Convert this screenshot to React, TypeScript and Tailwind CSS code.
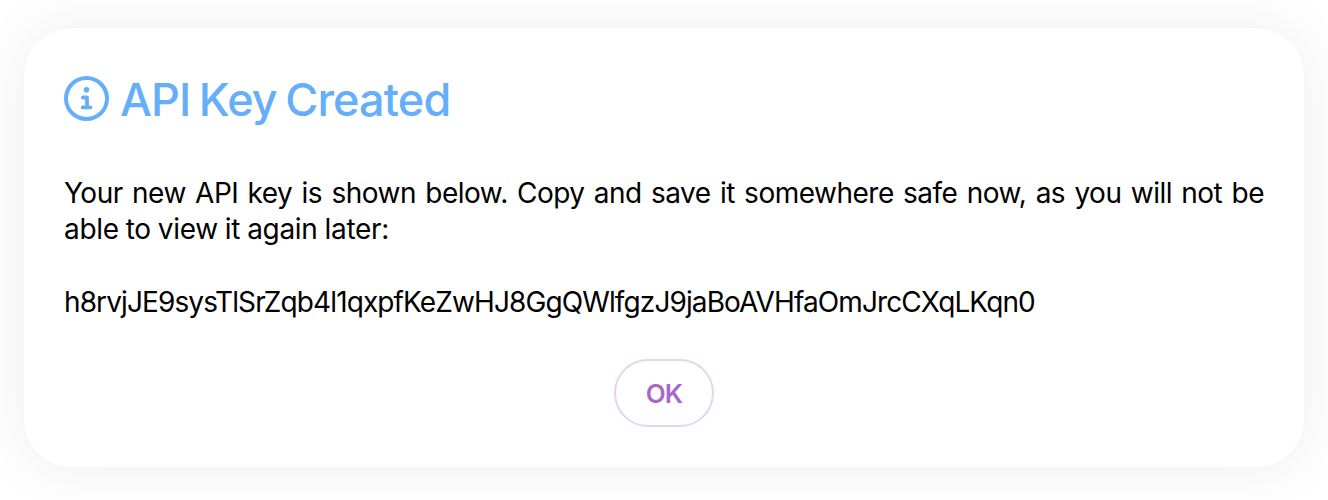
const textFont = "font-[Inter,'Liberation_Sans',sans-serif]";

function InfoIcon() {
  return (
    <svg className="h-[45px] w-[45px] shrink-0" viewBox="0 0 45 45" fill="none" stroke="currentColor" strokeLinecap="round" strokeLinejoin="round">
      <circle cx="22.5" cy="22.5" r="20.5" strokeWidth="4" />
      <circle cx="22.5" cy="13.8" r="2.8" fill="currentColor" stroke="none" />
      <path d="M18.9 21.5h4.1v9.9M18.7 31.4h7.7" strokeWidth="3.8" />
    </svg>
  );
}

export default function App() {
  return (
    <main className={"flex h-[500px] w-full items-start justify-center overflow-hidden bg-white px-6 pt-7 text-black " + textFont}>
      <section className="flex h-[439px] w-[1280px] flex-col rounded-[48px] bg-white px-10 pt-12 shadow-[0_0_60px_rgba(0,0,0,0.075)]">
        <header className="flex h-[45px] items-center gap-[11px] text-[#64aefa]">
          <InfoIcon />
          <h1 className="pt-0.5 text-[45px] leading-[48px] font-medium tracking-[-0.85px] whitespace-nowrap [word-spacing:-2.8px]">API Key Created</h1>
        </header>
        <p className="mt-[54px] text-[28px] leading-9">
          <span className="block text-justify tracking-[-0.5px] whitespace-nowrap [text-align-last:justify]">
            Your new API key is shown below. Copy and save it somewhere safe now, as you will not be{" "}
          </span>
          <span className="block tracking-[-0.3px] whitespace-nowrap [word-spacing:-0.6px]">able to view it again later:</span>
        </p>
        <p className="mt-[37px] text-[28px] leading-9 tracking-[-0.89px] whitespace-nowrap">h8rvjJE9sysTlSrZqb4l1qxpfKeZwHJ8GgQWlfgzJ9jaBoAVHfaOmJrcCXqLKqn0</p>
        <button className="mt-[39px] h-[68px] w-[100px] self-center rounded-full border-2 border-[#e5d4f0] text-[26px] font-semibold tracking-[-1px] text-[#a868ca]">OK</button>
      </section>
    </main>
  );
}
